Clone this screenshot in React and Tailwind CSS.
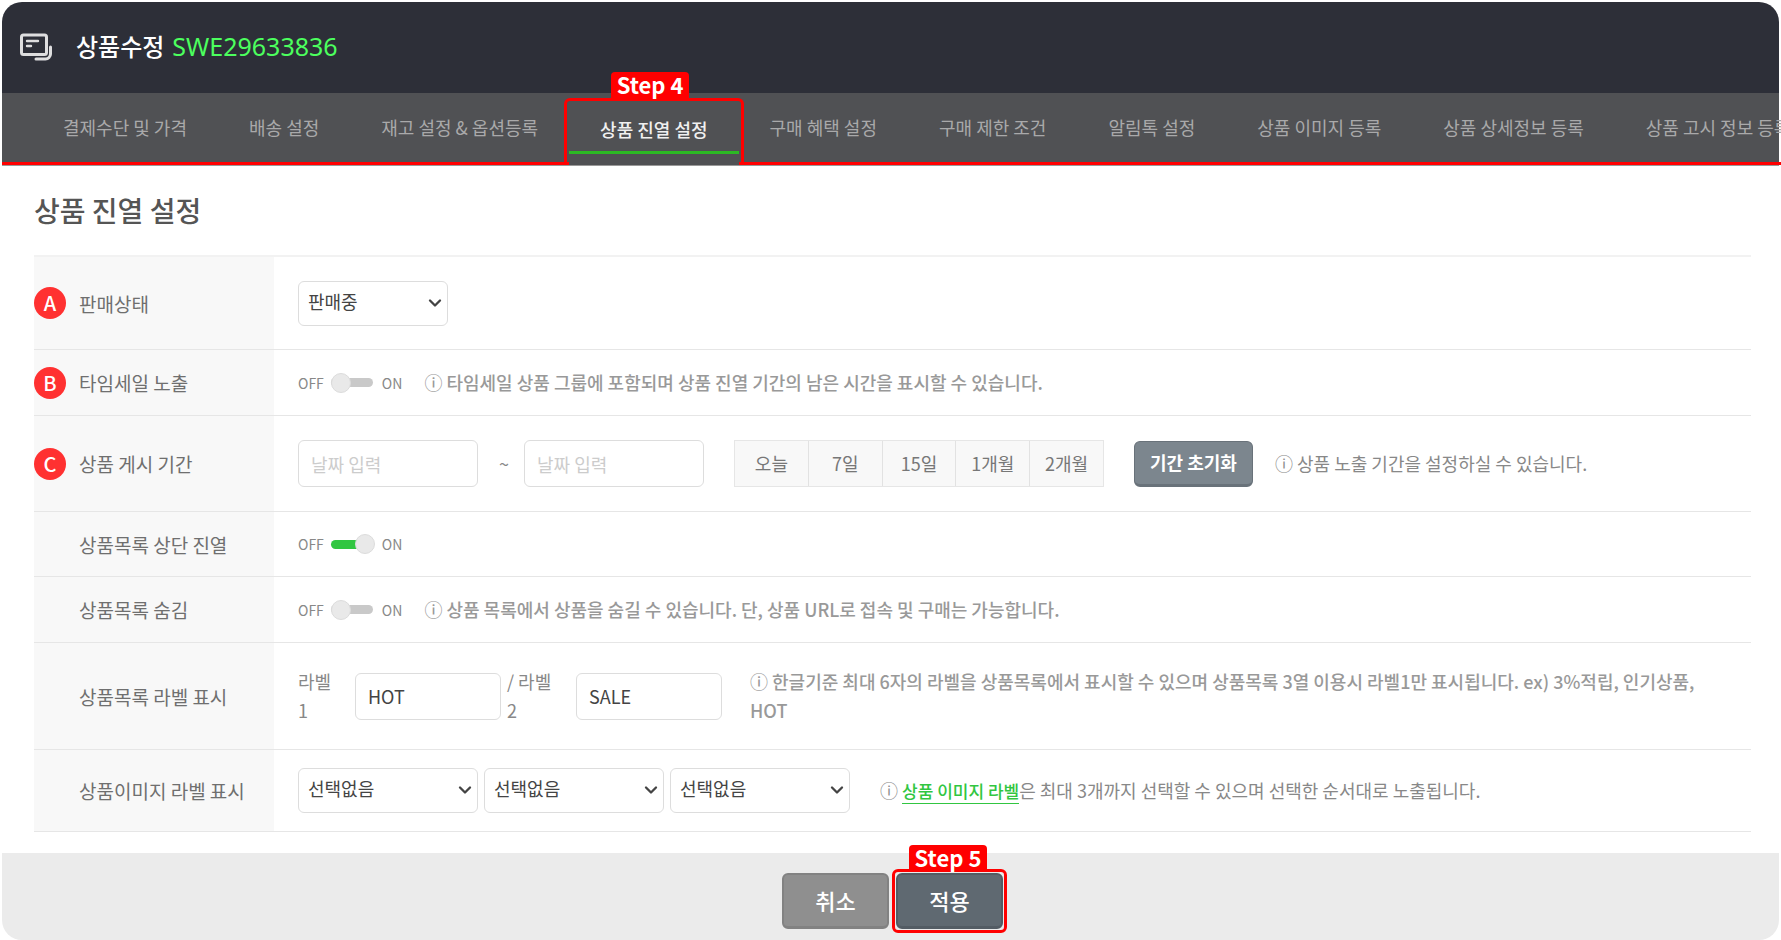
import { useState } from "react";
import { ChevronDown } from "lucide-react";

const tabs = [
  "결제수단 및 가격",
  "배송 설정",
  "재고 설정 & 옵션등록",
  "상품 진열 설정",
  "구매 혜택 설정",
  "구매 제한 조건",
  "알림톡 설정",
  "상품 이미지 등록",
  "상품 상세정보 등록",
  "상품 고시 정보 등록",
];

const periods = ["오늘", "7일", "15일", "1개월", "2개월"];

const Row = ({ badge, label, htmlFor, height, children }) => (
  <div className={`flex border-b border-[#e6e6e6] ${height}`}>
    <div className="flex w-60 shrink-0 items-center gap-[13px] bg-[#f8f8f8] text-[#6f6f6f]">
      <span
        className={`flex size-8 items-center justify-center rounded-full text-xl font-medium text-white ${
          badge ? "bg-[#ff3131]" : ""
        }`}
      >
        {badge}
      </span>
      <label htmlFor={htmlFor} className="text-[19px]">
        {label}
      </label>
    </div>
    <div className="flex min-w-0 flex-1 items-center pl-6">{children}</div>
  </div>
);

const Select = ({ id, label, options, width }) => (
  <div className={`relative h-[45px] shrink-0 ${width}`}>
    <select
      id={id}
      aria-label={label}
      className="size-full appearance-none rounded-md border border-[#ddd] bg-white pb-1 pl-[9px] text-[#444]"
    >
      {options.map((option) => (
        <option key={option}>{option}</option>
      ))}
    </select>
    <ChevronDown
      className="pointer-events-none absolute right-[3px] top-3 size-5 text-[#444]"
      strokeWidth={2.8}
    />
  </div>
);

const Toggle = ({ id, defaultChecked = false }) => {
  const [checked, setChecked] = useState(defaultChecked);

  return (
    <div className="flex items-center text-sm text-[#888]">
      <span>OFF</span>
      <span className="relative mx-[7px] flex h-5 w-11 items-center">
        <input
          id={id}
          type="checkbox"
          role="switch"
          checked={checked}
          onChange={() => setChecked(!checked)}
          className={`h-[9px] w-[42px] cursor-pointer appearance-none rounded-full ${
            checked ? "bg-[#31c641]" : "bg-[#c9c9c9]"
          }`}
        />
        <span
          className={`pointer-events-none absolute top-0 size-5 rounded-full border border-[#dcdcdc] bg-[#e9e9e9] ${
            checked ? "right-0" : "left-0"
          }`}
        />
      </span>
      <span>ON</span>
    </div>
  );
};

const inputClass =
  "h-[47px] shrink-0 rounded-md border border-[#ddd] bg-white px-3 text-[#444] placeholder:text-[#ccc]";

const App = () => {
  const [activeTab, setActiveTab] = useState("상품 진열 설정");

  return (
    <div className="overflow-hidden bg-white pt-0.5 font-['Noto_Sans_CJK_KR',sans-serif] text-lg leading-[29px] text-[#888]">
      {/* Title bar */}
      <header className="mx-0.5 flex h-[91px] items-center rounded-t-[20px] bg-[#2d2f38] pb-0.5 pl-[18px]">
        <svg
          className="h-7 w-8"
          viewBox="0 0 32 28"
          fill="none"
          stroke="#dededf"
          strokeWidth="3"
          strokeLinecap="round"
          strokeLinejoin="round"
        >
          <rect x="1.5" y="2" width="25" height="19.500" rx="2" />
          <path d="M7 8h11M7 13h4" strokeWidth="2.4" />
          <path d="M30.500 14v7a5 5 0 0 1-5 5H16" />
        </svg>
        <h1 className="ml-6 flex items-center gap-2 text-2xl font-medium text-white">
          상품수정
          <span className="font-['Noto_Sans',sans-serif] text-[25px] font-normal text-[#4cff5e]">
            SWE29633836
          </span>
        </h1>
      </header>

      {/* Tabs */}
      <nav className="mx-0.5 border-b border-[#999] bg-[#505154]">
        <div className="flex h-[72px]">
          <div className="w-[30px] shrink-0 border-b-3 border-[#f00]" />
          {tabs.map((tab) =>
            tab === activeTab ? (
              <div key={tab} className="relative -mx-[5px] flex shrink-0">
                <button
                  type="button"
                  className="mt-[5px] flex items-start rounded-t-md border-3 border-b-0 border-[#f00] px-0.5 font-medium text-[#f0f0f0]"
                >
                  <span className="flex h-[53px] items-center justify-center border-b-3 border-[#2cba24] px-[31px] pt-1.5">
                    {tab}
                  </span>
                </button>
                <span className="absolute -top-[21px] left-[47px] flex h-[29px] w-[78px] items-start justify-center rounded-t bg-[#f00] text-[22px] leading-6 font-bold text-white">
                  Step 4
                </span>
              </div>
            ) : (
              <button
                key={tab}
                type="button"
                onClick={() => setActiveTab(tab)}
                className="shrink-0 border-b-3 border-[#f00] px-[31px] text-[#a9a9aa]"
              >
                {tab}
              </button>
            )
          )}
        </div>
      </nav>

      <main className="pb-[21px] pl-[34px] pr-[30px]">
        <h2 className="pt-7 pb-[29px] text-[28px] leading-8 font-medium text-[#555]">
          상품 진열 설정
        </h2>

        <div className="border-t-2 border-[#f2f2f2]">
          <Row badge="A" label="판매상태" htmlFor="status" height="min-h-[93px]">
            <Select id="status" options={["판매중", "품절"]} width="w-[150px]" />
          </Row>

          <Row badge="B" label="타임세일 노출" htmlFor="timesale" height="min-h-[66px]">
            <Toggle id="timesale" />
            <p className="ml-[22px] font-medium text-[#999]">
              ⓘ 타임세일 상품 그룹에 포함되며 상품 진열 기간의 남은 시간을 표시할
              수 있습니다.
            </p>
          </Row>

          <Row badge="C" label="상품 게시 기간" htmlFor="start" height="min-h-24">
            <input
              id="start"
              type="text"
              placeholder="날짜 입력"
              className={`${inputClass} w-[180px]`}
            />
            <span className="w-[46px] pl-1.5 text-center">~</span>
            <input
              type="text"
              aria-label="종료 날짜"
              placeholder="날짜 입력"
              className={`${inputClass} w-[180px]`}
            />
            <div className="ml-[30px] flex h-[47px] w-[370px] border border-[#e6e6e6] bg-[#f8f8f8]">
              {periods.map((period) => (
                <button
                  key={period}
                  type="button"
                  className="flex-1 border-r border-[#e2e2e2] text-[#777] last:border-r-0"
                >
                  {period}
                </button>
              ))}
            </div>
            <button
              type="button"
              className="ml-[30px] h-[46px] w-[119px] rounded-md border border-b-3 border-[#69727a] bg-[#7c868e] font-bold text-white"
            >
              기간 초기화
            </button>
            <p className="ml-[22px]">ⓘ 상품 노출 기간을 설정하실 수 있습니다.</p>
          </Row>

          <Row label="상품목록 상단 진열" htmlFor="top" height="min-h-[65px]">
            <Toggle id="top" defaultChecked />
          </Row>

          <Row label="상품목록 숨김" htmlFor="hide" height="min-h-[66px]">
            <Toggle id="hide" />
            <p className="ml-[22px] font-medium text-[#999]">
              ⓘ 상품 목록에서 상품을 숨길 수 있습니다. 단, 상품 URL로 접속 및
              구매는 가능합니다.
            </p>
          </Row>

          <Row label="상품목록 라벨 표시" htmlFor="label1" height="min-h-[107px]">
            <span className="w-[57px] shrink-0">
              라벨
              <br />1
            </span>
            <input
              id="label1"
              type="text"
              defaultValue="HOT"
              className={`${inputClass} w-[146px]`}
            />
            <label htmlFor="label2" className="w-[75px] shrink-0 pl-1.5">
              / 라벨
              <br />2
            </label>
            <input
              id="label2"
              type="text"
              defaultValue="SALE"
              className={`${inputClass} w-[146px]`}
            />
            <p className="ml-7 pr-10 font-medium text-[#999]">
              ⓘ 한글기준 최대 6자의 라벨을 상품목록에서 표시할 수 있으며 상품목록
              3열 이용시 라벨1만 표시됩니다. ex) 3%적립, 인기상품, HOT
            </p>
          </Row>

          <Row label="상품이미지 라벨 표시" htmlFor="image1" height="min-h-[82px]">
            <div className="flex gap-1.5">
              <Select id="image1" options={["선택없음"]} width="w-[180px]" />
              <Select label="이미지 라벨 2" options={["선택없음"]} width="w-[180px]" />
              <Select label="이미지 라벨 3" options={["선택없음"]} width="w-[180px]" />
            </div>
            <p className="ml-[30px]">
              ⓘ{" "}
              <a
                href="#"
                className="border-b border-[#31c641] text-[17px] font-medium text-[#31c641]"
              >
                상품 이미지 라벨
              </a>
              은 최대 3개까지 선택할 수 있으며 선택한 순서대로 노출됩니다.
            </p>
          </Row>
        </div>
      </main>

      {/* Actions */}
      <footer className="mx-0.5 flex h-[87px] items-center justify-center gap-[3px] rounded-b-[20px] bg-[#ebebeb] pt-2 pl-2">
        <button
          type="button"
          className="h-14 w-[107px] rounded-md border-2 border-b-3 border-[#828282] bg-[#8f8f8f] text-[22px] font-medium text-white"
        >
          취소
        </button>
        <div className="relative rounded-md border-3 border-[#f00] p-px">
          <button
            type="button"
            className="h-14 w-[107px] rounded-md border-2 border-b-3 border-[#535c64] bg-[#5f6971] text-[22px] font-medium text-white"
          >
            적용
          </button>
          <span className="absolute bottom-full left-3.5 flex h-[27px] w-[78px] items-start justify-center rounded-t bg-[#f00] text-[22px] leading-6 font-bold text-white">
            Step 5
          </span>
        </div>
      </footer>
    </div>
  );
};

export default App;
